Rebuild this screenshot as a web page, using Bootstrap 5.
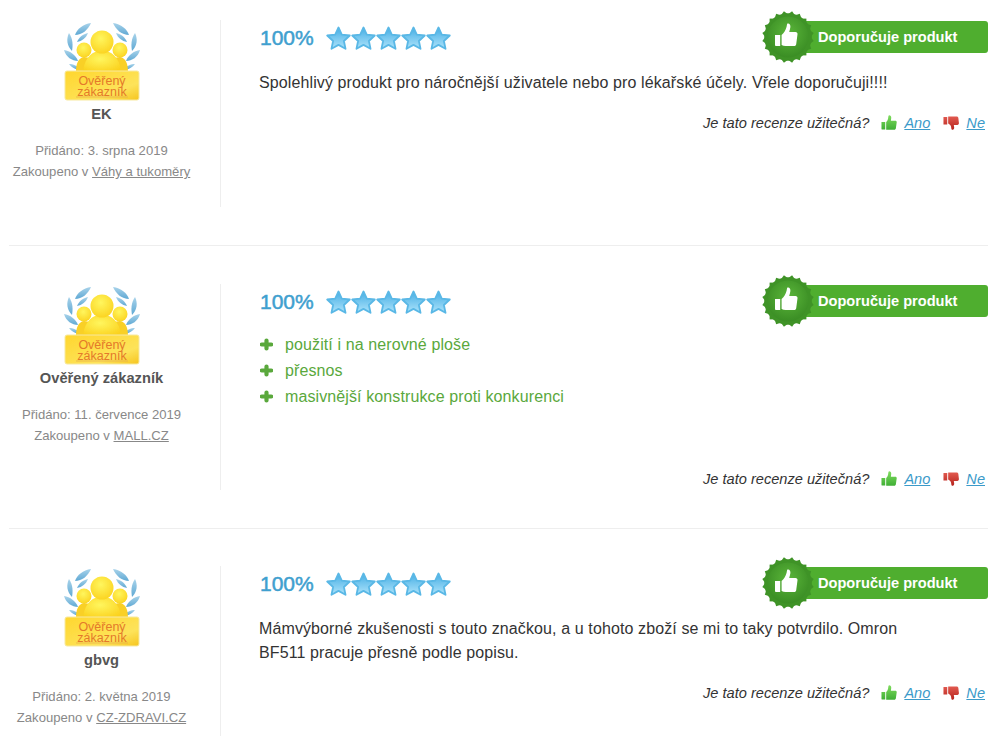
<!DOCTYPE html>
<html lang="cs">
<head>
<meta charset="utf-8">
<title>Recenze</title>
<link href="https://cdn.jsdelivr.net/npm/bootstrap@5.3.0/dist/css/bootstrap.min.css" rel="stylesheet">
<style>
html,body{overflow:hidden;height:736px}
body{font-family:"Liberation Sans",Arial,sans-serif;color:#333;background:#fff}
.rv-list{margin:20px 15px 0 9px}
.rv-item{padding-bottom:38px;margin-bottom:38px;border-bottom:1px solid #eee}
.rv-item + .rv-item + .rv-item{margin-top:-1px}
.rv-side{width:212px;flex:none;min-height:187px;border-right:1px solid #eee;padding-right:26px;text-align:center;color:#888;font-size:13.1px;line-height:21px}
.rv-avatar{display:block;margin:2px auto 0;width:78px;height:80px}
.rv-name{font-size:14.7px;font-weight:700;color:#555;line-height:20px;margin:2px 0 16px}
.rv-side a{color:#888}
.rv-main{padding-left:38px;padding-bottom:1px;min-width:0}
.rv-head{height:36px}
.rv-pct{font-size:21px;font-weight:400;-webkit-text-stroke:.5px #3fa0cf;color:#3fa0cf;width:67px;padding-left:1px}
.rv-stars{width:125px;height:25px}
.rv-rec{width:226px;height:52px;position:relative;margin-top:-2px}
.rv-rec-bar{position:absolute;left:26px;right:0;top:10px;height:32px;background:#4fae2f;border-radius:3px;color:#fff;font-size:14.6px;font-weight:700;line-height:32px;padding-left:30px}
.rv-seal{position:absolute;left:0;top:0;width:52px;height:52px}
.rv-text{font-size:16px;letter-spacing:.11px;line-height:24px;margin:15px 0 0;max-width:650px}
.rv-pros{list-style:none;padding:0;margin:12px 0 59px;color:#5aa83c;font-size:16px;letter-spacing:.11px;line-height:26px}
.rv-pros svg{width:13px;height:13px;margin:0 12px 0 1px;vertical-align:-1px}
.rv-useful{font-style:italic;font-size:14.6px;line-height:20px;margin-top:18px;padding-right:3px}
.rv-useful a{color:#3b9ac9}
.rv-useful svg{width:16px;height:16px;flex:none;margin-right:7px}
.rv-useful .rv-q{margin-right:12px}
.rv-useful .rv-yes{margin-right:13px}
</style>
</head>
<body>
<svg width="0" height="0" class="position-absolute">
  <defs>
    <linearGradient id="gStar" x1="0" y1="0" x2="0" y2="1"><stop offset="0" stop-color="#45ade4"/><stop offset="1" stop-color="#aee4fb"/></linearGradient>
    <radialGradient id="gSeal" cx=".5" cy=".4" r=".6"><stop offset="0" stop-color="#5bb63a"/><stop offset="1" stop-color="#3a8d24"/></radialGradient>
    <radialGradient id="gHead" cx=".45" cy=".35" r=".7"><stop offset="0" stop-color="#fff65e"/><stop offset="1" stop-color="#fbd21e"/></radialGradient>
    <linearGradient id="gPlate" x1="0" y1="0" x2="1" y2="1"><stop offset="0" stop-color="#ffd62e"/><stop offset=".7" stop-color="#fde35a"/><stop offset="1" stop-color="#f6c51f"/></linearGradient>
    <linearGradient id="gLeaf" x1="0" y1="0" x2="0" y2="1"><stop offset="0" stop-color="#a9d3ea"/><stop offset="1" stop-color="#5fa9d4"/></linearGradient>
    <linearGradient id="gYes" x1="0" y1="0" x2="0" y2="1"><stop offset="0" stop-color="#7fdc5e"/><stop offset="1" stop-color="#3fae35"/></linearGradient>
    <linearGradient id="gNo" x1="0" y1="0" x2="0" y2="1"><stop offset="0" stop-color="#e25a50"/><stop offset="1" stop-color="#b5221c"/></linearGradient>
    <filter id="fSoft"><feGaussianBlur stdDeviation=".35"/></filter>
    <symbol id="star" viewBox="0 0 25 25">
      <path d="M12.5 1.5 15.8 8.600 23.800 9.500 17.900 15 19.500 22.800 12.500 18.900 5.500 22.800 7.100 15 1.200 9.500 9.200 8.600Z" fill="url(#gStar)" stroke="#5ab8e6" stroke-width="1.800" stroke-linejoin="round"/>
    </symbol>
    <symbol id="stars" viewBox="0 0 125 25">
      <use href="#star" x="0" width="25" height="25"/><use href="#star" x="25" width="25" height="25"/><use href="#star" x="50" width="25" height="25"/><use href="#star" x="75" width="25" height="25"/><use href="#star" x="100" width="25" height="25"/>
    </symbol>
    <symbol id="seal" viewBox="0 0 52 52">
      <g fill="#3f9327">
        <circle cx="26" cy="26" r="23.8"/>
        <rect x="7.600" y="7.600" width="36.800" height="36.800"/>
        <rect x="7.600" y="7.600" width="36.800" height="36.800" transform="rotate(18 26 26)"/>
        <rect x="7.600" y="7.600" width="36.800" height="36.800" transform="rotate(36 26 26)"/>
        <rect x="7.600" y="7.600" width="36.800" height="36.800" transform="rotate(54 26 26)"/>
        <rect x="7.600" y="7.600" width="36.800" height="36.800" transform="rotate(72 26 26)"/>
      </g>
      <circle cx="26" cy="26" r="20.500" fill="url(#gSeal)"/>
      <path fill="#fff" transform="translate(0 -1.500)" d="M13 25.500h5.200v11H13.900a.9.9 0 0 1-.9-.9ZM19.600 25.400c2.600-2.300 4.200-5 5-8.200.3-1.300.4-2.600.8-3.100 1.700-.7 3.200.9 3 3.200-.1 1.700-.8 3.600-1.200 5.200h6.300c1.400 0 2.100 1 2 2.200l-1.300 10c-.2 1.100-.9 1.800-2 1.800h-8.600c-1.500 0-2.800-.5-4-1Z"/>
    </symbol>
    <g id="laurel" fill="url(#gLeaf)">
      <path d="M28 1C20 2 14 7 12 13 19 13 25 8 28 1Z"/>
      <path d="M25 11C20 12 16 15 14 20 19 19 23 16 25 11Z"/>
      <path d="M6 11C3 17 4 24 9 29 10 23 10 17 6 11Z"/>
      <path d="M1 28C3 35 9 39 15 39 13 33 7 29 1 28Z"/>
      <path d="M6 42C9 46 13 48 17 47 15 44 10 42 6 42Z"/>
    </g>
    <symbol id="avatar" viewBox="0 0 78 80">
      <g filter="url(#fSoft)">
        <use href="#laurel"/>
        <use href="#laurel" transform="translate(78 0) scale(-1 1)"/>
        <circle cx="21" cy="28" r="7.500" fill="url(#gHead)"/><circle cx="57" cy="28" r="7.500" fill="url(#gHead)"/>
        <path d="M13 50C13 42 15 36 21 35 26 35 29 38 31 41H47C49 38 52 35 57 35 63 36 65 42 65 50Z" fill="#f9d026"/>
        <path d="M20 50C21 40 25 33 32 30H46C53 33 57 40 58 50Z" fill="url(#gHead)"/>
        <circle cx="39" cy="20" r="11.500" fill="url(#gHead)"/>
        <rect x="2" y="49" width="74" height="29" rx="2" fill="url(#gPlate)" stroke="#f7e9a0"/>
        <path d="M13 75h52" stroke="#e4a94a" stroke-width=".7"/>
      </g>
      <text x="39" y="63" text-anchor="middle" font-family="Liberation Sans, sans-serif" font-size="12.500" fill="#e4792a">Ověřený</text>
      <text x="39" y="74" text-anchor="middle" font-family="Liberation Sans, sans-serif" font-size="12.500" fill="#e4792a">zákazník</text>
    </symbol>
    <symbol id="yes" viewBox="0 0 17 17">
      <path fill="url(#gYes)" d="M.5 7.500h4v8H1.500a1 1 0 0 1-1-1ZM5.500 7.500c1.300-1 1.800-2.500 2.100-4 .2-1 0-2.500 1-3.200 1.500 0 2.400 1 2.300 2.500L10.500 6h4.500c1.200 0 1.900.7 1.700 1.700l-.9 6.500c-.2 1-.8 1.600-1.800 1.600H5.500Z"/>
    </symbol>
    <symbol id="no" viewBox="0 0 17 17">
      <path fill="url(#gNo)" d="M.5 2h4v8h-4ZM5.500 1.500h9c1 0 1.600.6 1.800 1.600l.6 5.500c.1 1-.5 1.900-1.700 1.900H11.500l.4 2.700c.1 1.500-.8 2.600-2.300 2.600-1-.7-.8-2.200-1-3.200-.3-1.500-1.300-2.800-3.100-3.600Z"/>
    </symbol>
    <symbol id="plus" viewBox="0 0 13 13">
      <path d="M6.500 2.500v8M1.800 6.500h9.400" stroke="#5aa83c" stroke-width="4.200" stroke-linecap="round"/>
    </symbol>
  </defs>
</svg>

<main class="rv-list">
  <article class="rv-item d-flex">
    <aside class="rv-side">
      <svg class="rv-avatar" role="img" aria-label="Ověřený zákazník"><use href="#avatar"/></svg>
      <div class="rv-name">EK</div>
      <div>Přidáno: 3. srpna 2019</div>
      <div>Zakoupeno v <a href="#">Váhy a tukoměry</a></div>
    </aside>
    <div class="rv-main flex-grow-1">
      <div class="rv-head d-flex align-items-center justify-content-between">
        <div class="d-flex align-items-center"><span class="rv-pct">100%</span><svg class="rv-stars"><use href="#stars"/></svg></div>
        <div class="rv-rec"><div class="rv-rec-bar">Doporučuje produkt</div><svg class="rv-seal"><use href="#seal"/></svg></div>
      </div>
      <p class="rv-text">Spolehlivý produkt pro náročnější uživatele nebo pro lékařské účely. Vřele doporučuji!!!!</p>
      <div class="rv-useful d-flex align-items-center justify-content-end">
        <span class="rv-q">Je tato recenze užitečná?</span>
        <svg><use href="#yes"/></svg><a class="rv-yes" href="#">Ano</a>
        <svg><use href="#no"/></svg><a href="#">Ne</a>
      </div>
    </div>
  </article>

  <article class="rv-item d-flex">
    <aside class="rv-side">
      <svg class="rv-avatar" role="img" aria-label="Ověřený zákazník"><use href="#avatar"/></svg>
      <div class="rv-name">Ověřený zákazník</div>
      <div>Přidáno: 11. července 2019</div>
      <div>Zakoupeno v <a href="#">MALL.CZ</a></div>
    </aside>
    <div class="rv-main flex-grow-1">
      <div class="rv-head d-flex align-items-center justify-content-between">
        <div class="d-flex align-items-center"><span class="rv-pct">100%</span><svg class="rv-stars"><use href="#stars"/></svg></div>
        <div class="rv-rec"><div class="rv-rec-bar">Doporučuje produkt</div><svg class="rv-seal"><use href="#seal"/></svg></div>
      </div>
      <ul class="rv-pros">
        <li><svg><use href="#plus"/></svg>použití i na nerovné ploše</li>
        <li><svg><use href="#plus"/></svg>přesnos</li>
        <li><svg><use href="#plus"/></svg>masivnější konstrukce proti konkurenci</li>
      </ul>
      <div class="rv-useful d-flex align-items-center justify-content-end">
        <span class="rv-q">Je tato recenze užitečná?</span>
        <svg><use href="#yes"/></svg><a class="rv-yes" href="#">Ano</a>
        <svg><use href="#no"/></svg><a href="#">Ne</a>
      </div>
    </div>
  </article>

  <article class="rv-item d-flex">
    <aside class="rv-side">
      <svg class="rv-avatar" role="img" aria-label="Ověřený zákazník"><use href="#avatar"/></svg>
      <div class="rv-name">gbvg</div>
      <div>Přidáno: 2. května 2019</div>
      <div>Zakoupeno v <a href="#">CZ-ZDRAVI.CZ</a></div>
    </aside>
    <div class="rv-main flex-grow-1">
      <div class="rv-head d-flex align-items-center justify-content-between">
        <div class="d-flex align-items-center"><span class="rv-pct">100%</span><svg class="rv-stars"><use href="#stars"/></svg></div>
        <div class="rv-rec"><div class="rv-rec-bar">Doporučuje produkt</div><svg class="rv-seal"><use href="#seal"/></svg></div>
      </div>
      <p class="rv-text">Mámvýborné zkušenosti s touto značkou, a u tohoto zboží se mi to taky potvrdilo. Omron BF511 pracuje přesně podle popisu.</p>
      <div class="rv-useful d-flex align-items-center justify-content-end">
        <span class="rv-q">Je tato recenze užitečná?</span>
        <svg><use href="#yes"/></svg><a class="rv-yes" href="#">Ano</a>
        <svg><use href="#no"/></svg><a href="#">Ne</a>
      </div>
    </div>
  </article>
</main>
<script src="https://cdn.jsdelivr.net/npm/bootstrap@5.3.0/dist/js/bootstrap.bundle.min.js"></script>
</body>
</html>
